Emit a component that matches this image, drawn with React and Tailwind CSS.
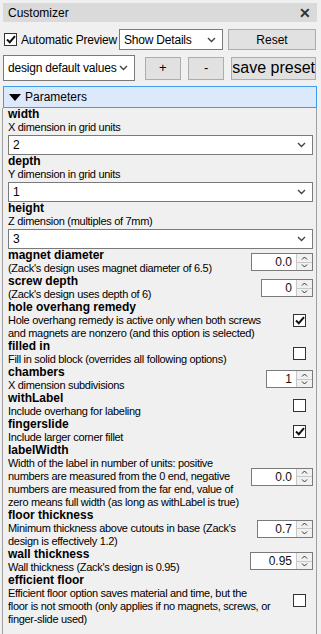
import React from "react";

const font = { fontFamily: '"Liberation Sans", Arial, sans-serif' };

const Chevron = () => (
  <svg width="9" height="6" viewBox="0 0 9 6" className="shrink-0">
    <path d="M1 1 L4.5 4.5 L8 1" stroke="#444" strokeWidth="1.4" fill="none" />
  </svg>
);

const Check = () => (
  <svg width="10" height="9" viewBox="0 0 10 9">
    <path d="M1 4.5 L3.8 7.2 L9 1.2" stroke="#111" strokeWidth="2" fill="none" />
  </svg>
);

const Checkbox = ({ checked }) => (
  <div className="w-[13px] h-[13px] border border-[#333] bg-white flex items-center justify-center shrink-0">
    {checked && <Check />}
  </div>
);

const Combo = ({ value, className = "" }) => (
  <div className={`flex items-center justify-between bg-white border border-[#7a7a7a] pl-[4px] pr-[6px] text-[12px] tracking-[-0.2px] whitespace-nowrap text-black ${className}`}>
    <span>{value}</span>
    <Chevron />
  </div>
);

const Spin = ({ value, width }) => (
  <div className="flex h-[18px] border border-[#7a7a7a] bg-white shrink-0" style={{ width }}>
    <div className="flex-1 text-right pr-[4px] text-[12px] leading-[16px] text-[#111]">{value}</div>
    <div className="w-[16px] flex flex-col border-l border-[#c8c8c8]">
      <div className="flex-1 bg-[#f0f0f0] border-b border-[#c8c8c8] flex items-center justify-center">
        <svg width="7" height="4" viewBox="0 0 7 4"><path d="M1 3.5 L3.5 1 L6 3.5" stroke="#333" strokeWidth="1" fill="none" /></svg>
      </div>
      <div className="flex-1 bg-[#f0f0f0] flex items-center justify-center">
        <svg width="7" height="4" viewBox="0 0 7 4"><path d="M1 0.5 L3.5 3 L6 0.5" stroke="#333" strokeWidth="1" fill="none" /></svg>
      </div>
    </div>
  </div>
);

const Label = ({ children }) => (
  <div className="font-bold text-[12px] leading-[13px] h-[13px] whitespace-nowrap text-black">{children}</div>
);

const Desc = ({ children }) => (
  <div className="text-[11px] leading-[13px] tracking-[-0.3px] whitespace-nowrap text-black">{children}</div>
);

const SelectParam = ({ label, desc, value }) => (
  <div className="flex flex-col">
    <Label>{label}</Label>
    <Desc>{desc}</Desc>
    <Combo value={value} className="h-[20px] mt-[1px] mr-[3px]" />
  </div>
);

const RowParam = ({ label, desc, control }) => (
  <div className="flex items-center">
    <div className="flex-1 flex flex-col">
      <Label>{label}</Label>
      <Desc>{desc}</Desc>
    </div>
    <div className="flex justify-end pr-[3px]">{control}</div>
  </div>
);

const CheckCtrl = ({ checked }) => (
  <div className="w-[20px] flex justify-start">
    <Checkbox checked={checked} />
  </div>
);

export default function App() {
  return (
    <div className="w-[321px] h-[634px] bg-[#f0f0f0] overflow-hidden" style={font}>
      <div className="pt-[3px] px-[3px] pr-[4px]">
        <div className="h-[19px] bg-[#dadada] flex items-center justify-between pl-[5px] pr-[6px]">
          <span className="text-[12px] text-black">Customizer</span>
          <span className="text-[14px] font-bold text-[#333] leading-none">✕</span>
        </div>
      </div>

      <div className="flex items-center mt-[7px] pl-[4px] pr-[5px]">
        <Checkbox checked />
        <span className="text-[12px] tracking-[-0.2px] whitespace-nowrap ml-[4px] w-[98px]">Automatic Preview</span>
        <Combo value="Show Details" className="w-[104px] h-[21px]" />
        <button className="ml-[5px] flex-1 h-[21px] bg-[#e1e1e1] border border-[#adadad] text-[12px]">Reset</button>
      </div>

      <div className="flex items-center mt-[5px] pl-[3px] pr-[5px]">
        <Combo value="design default values" className="w-[134px] h-[26px]" />
        <button className="ml-[10px] w-[37px] h-[23px] bg-[#e1e1e1] border border-[#adadad] text-[13px]">+</button>
        <button className="ml-[7px] w-[37px] h-[23px] bg-[#e1e1e1] border border-[#adadad] text-[13px]">-</button>
        <button className="ml-[7px] flex-1 h-[23px] bg-[#e1e1e1] border border-[#adadad] text-[16px] leading-[20px] whitespace-nowrap">save preset</button>
      </div>

      <div className="mx-[3px] mr-[4px] mt-[5px] h-[22px] bg-[#dbe9fb] border border-[#3c9cf0] flex items-center pl-[5px]">
        <svg width="12" height="7" viewBox="0 0 12 7"><path d="M0 0 H12 L6 7 Z" fill="#000" /></svg>
        <span className="text-[12px] ml-[4px]">Parameters</span>
      </div>

      <div className="ml-[2px] mr-[4px] border-l border-r border-[#a0a0a0] h-[540px] pl-[5px] flex flex-col">
        <SelectParam label="width" desc="X dimension in grid units" value="2" />
        <SelectParam label="depth" desc="Y dimension in grid units" value="1" />
        <SelectParam label="height" desc="Z dimension (multiples of 7mm)" value="3" />
        <RowParam
          label="magnet diameter"
          desc="(Zack's design uses magnet diameter of 6.5)"
          control={<Spin value="0.0" width={62} />}
        />
        <RowParam
          label="screw depth"
          desc="(Zack's design uses depth of 6)"
          control={<Spin value="0" width={52} />}
        />
        <RowParam
          label="hole overhang remedy"
          desc={<>Hole overhang remedy is active only when both screws<br />and magnets are nonzero (and this option is selected)</>}
          control={<CheckCtrl checked />}
        />
        <RowParam
          label="filled in"
          desc="Fill in solid block (overrides all following options)"
          control={<CheckCtrl />}
        />
        <RowParam
          label="chambers"
          desc="X dimension subdivisions"
          control={<Spin value="1" width={47} />}
        />
        <RowParam
          label="withLabel"
          desc="Include overhang for labeling"
          control={<CheckCtrl />}
        />
        <RowParam
          label="fingerslide"
          desc="Include larger corner fillet"
          control={<CheckCtrl checked />}
        />
        <RowParam
          label="labelWidth"
          desc={<>Width of the label in number of units: positive<br />numbers are measured from the 0 end, negative<br />numbers are measured from the far end, value of<br />zero means full width (as long as withLabel is true)</>}
          control={<Spin value="0.0" width={62} />}
        />
        <RowParam
          label="floor thickness"
          desc={<>Minimum thickness above cutouts in base (Zack's<br />design is effectively 1.2)</>}
          control={<Spin value="0.7" width={56} />}
        />
        <RowParam
          label="wall thickness"
          desc="Wall thickness (Zack's design is 0.95)"
          control={<Spin value="0.95" width={63} />}
        />
        <RowParam
          label="efficient floor"
          desc={<>Efficient floor option saves material and time, but the<br />floor is not smooth (only applies if no magnets, screws, or<br />finger-slide used)</>}
          control={<CheckCtrl />}
        />
      </div>
    </div>
  );
}
